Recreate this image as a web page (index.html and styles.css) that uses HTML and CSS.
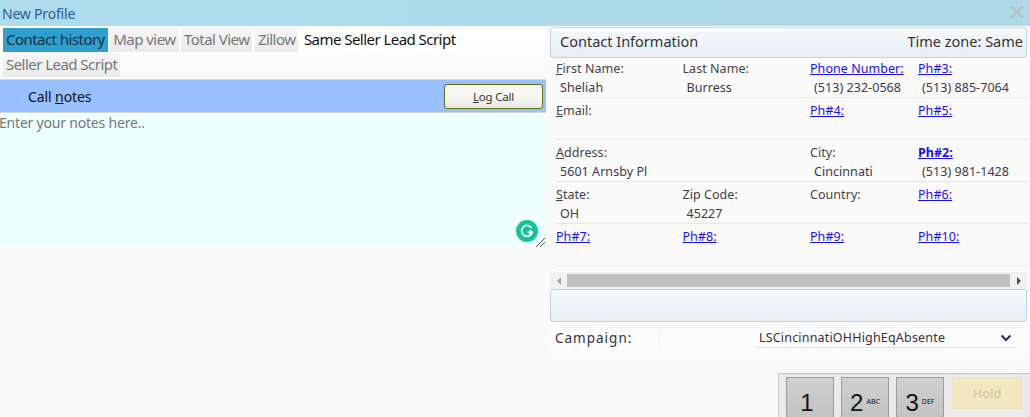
FILE: index.html
```html
<!DOCTYPE html>
<html lang="en">
<head>
  <meta charset="UTF-8">
  <meta name="viewport" content="width=device-width, initial-scale=1.0">
  <title>New Profile</title>
  <link rel="stylesheet" href="styles.css">
</head>
<body>
  <header class="title-bar">
    <span class="title-text">New Profile</span>
    <svg class="close-icon" width="14" height="14" viewBox="0 0 16 16"><path d="M1.5 1.5 14.5 14.5M14.5 1.5 1.5 14.5" stroke="#b3c0c6" stroke-width="2.6" fill="none"/></svg>
  </header>

  <div class="columns">
    <section class="left-col">
      <nav class="tabs">
        <a class="tab tab-active">Contact history</a>
        <a class="tab">Map view</a>
        <a class="tab">Total View</a>
        <a class="tab">Zillow</a>
        <a class="tab tab-plain">Same Seller Lead Script</a>
        <a class="tab">Seller Lead Script</a>
      </nav>

      <div class="notes-bar">
        <span class="notes-label">Call <u>n</u>otes</span>
        <button class="log-btn"><u>L</u>og Call</button>
      </div>

      <div class="notes-box">
        <span class="notes-hint">Enter your notes here..</span>
        <span class="grammarly">
          <svg width="22" height="22" viewBox="0 0 22 22"><circle cx="11" cy="11" r="11" fill="#15c39a"/><path d="M15.6 8A5.4 5.4 0 1 0 16.2 12.4H11.6M16.2 12.4 13.6 10.4M16.2 12.4 14 14.8" stroke="#fff" stroke-width="1.7" fill="none"/></svg>
        </span>
        <svg class="grip" width="9" height="9" viewBox="0 0 9 9"><path d="M0 9 9 0M4 9 9 4" stroke="#555" stroke-width="1" fill="none"/></svg>
      </div>
    </section>

    <section class="right-col">
      <div class="panel-head">
        <span class="panel-title">Contact Information</span>
        <span class="panel-zone">Time zone: Same</span>
      </div>

      <div class="info-row info-row-first">
        <div class="cell"><span class="lbl"><u>F</u>irst Name:</span><span class="val">Sheliah</span></div>
        <div class="cell"><span class="lbl">Last Name:</span><span class="val">Burress</span></div>
        <div class="cell"><a class="ph">Phone Number:</a><span class="val">(513) 232-0568</span></div>
        <div class="cell"><a class="ph">Ph#3:</a><span class="val">(513) 885-7064</span></div>
      </div>
      <div class="info-row">
        <div class="cell cell-wide"><span class="lbl"><u>E</u>mail:</span></div>
        <div class="cell"><a class="ph">Ph#4:</a></div>
        <div class="cell"><a class="ph">Ph#5:</a></div>
      </div>
      <div class="info-row">
        <div class="cell cell-wide"><span class="lbl"><u>A</u>ddress:</span><span class="val">5601 Arnsby Pl</span></div>
        <div class="cell"><span class="lbl">City:</span><span class="val">Cincinnati</span></div>
        <div class="cell"><a class="ph ph-bold">Ph#2:</a><span class="val">(513) 981-1428</span></div>
      </div>
      <div class="info-row">
        <div class="cell"><span class="lbl"><u>S</u>tate:</span><span class="val">OH</span></div>
        <div class="cell"><span class="lbl">Zip Code:</span><span class="val">45227</span></div>
        <div class="cell"><span class="lbl">Country:</span></div>
        <div class="cell"><a class="ph">Ph#6:</a></div>
      </div>
      <div class="info-row">
        <div class="cell"><a class="ph">Ph#7:</a></div>
        <div class="cell"><a class="ph">Ph#8:</a></div>
        <div class="cell"><a class="ph">Ph#9:</a></div>
        <div class="cell"><a class="ph">Ph#10:</a></div>
      </div>

      <div class="scrollbar">
        <span class="arrow arrow-left"></span>
        <span class="thumb"></span>
        <span class="arrow arrow-right"></span>
      </div>

      <div class="empty-panel"></div>

      <div class="campaign">
        <span class="campaign-label">Campaign:</span>
        <div class="campaign-select">
          <span>LSCincinnatiOHHighEqAbsente</span>
          <svg width="12" height="8" viewBox="0 0 12 8"><path d="M1.5 1.5 6 6 10.5 1.5" stroke="#2b2b55" stroke-width="2" fill="none"/></svg>
        </div>
      </div>

      <div class="dial-wrap">
        <div class="dial">
          <button class="key"><span class="key-num key-num-solo">1</span></button>
          <button class="key"><span class="key-num">2</span><span class="key-sub">ABC</span></button>
          <button class="key"><span class="key-num">3</span><span class="key-sub">DEF</span></button>
          <button class="hold">Hold</button>
        </div>
      </div>
    </section>
  </div>
</body>
</html>
```

FILE: styles.css
```css
html, body {
  height: 100%;
}

body {
  margin: 0;
  height: 417px;
  overflow: hidden;
  background: #fafafa;
  font-family: "Noto Sans", "Open Sans", sans-serif;
  color: #333;
}

.title-bar {
  height: 26px;
  background: linear-gradient(to right, #aedcec, #add9e8);
  display: flex;
  align-items: center;
  justify-content: space-between;
  padding: 0 6px 0 2px;
}

.title-text {
  font-size: 14px;
  letter-spacing: -0.2px;
  color: #2a5d93;
}

.close-icon {
  margin-top: -2px;
}

.columns {
  display: flex;
  align-items: flex-start;
}

/* left side */
.left-col {
  width: 546px;
  flex: none;
}

.tabs {
  display: flex;
  flex-wrap: wrap;
  gap: 1px 2.5px;
  padding: 2px 0 2px 3px;
  background: linear-gradient(#fff, #fafafa);
  height: 53px;
  box-sizing: border-box;
}

.tab {
  height: 24px;
  line-height: 22px;
  padding: 0 3px;
  font-size: 15px;
  letter-spacing: -0.54px;
  color: #777;
  background: linear-gradient(#f6f6f6, #eaeaea);
}

.tab-active {
  background: #2f9fd0;
  color: #10303f;
}

.tab-plain {
  background: #fff;
  color: #111;
}

.notes-bar {
  height: 34px;
  box-sizing: border-box;
  border-top: 1px solid #cfd8e0;
  border-bottom: 1px solid #d5d5d5;
  background: #99c0ff;
  display: flex;
  align-items: center;
  justify-content: space-between;
  padding: 1px 3px 0 28px;
}

.notes-label {
  font-size: 14px;
  letter-spacing: -0.1px;
  color: #111;
}

.log-btn {
  width: 99px;
  height: 25px;
  border: 1px solid #66700a;
  border-radius: 3px;
  background: linear-gradient(#f7f7f2 50%, #e8e8e4);
  font-family: inherit;
  font-size: 11.5px;
  letter-spacing: -0.2px;
  color: #333;
  padding: 0;
}

.notes-box {
  position: relative;
  height: 135px;
  background: #eeffff;
  box-sizing: border-box;
  font-size: 14px;
  letter-spacing: -0.2px;
  color: #777;
  line-height: 20px;
}

.notes-hint {
  margin-left: -1px;
}

.grammarly {
  position: absolute;
  right: 8px;
  bottom: 6px;
  width: 22px;
  height: 22px;
}

.grip {
  position: absolute;
  right: 1px;
  bottom: 1px;
}

/* right side */
.right-col {
  width: 477px;
  margin-left: 4px;
  flex: none;
}

.panel-head {
  height: 31px;
  box-sizing: border-box;
  margin-top: 1px;
  border: 1px solid #bcd6e6;
  border-radius: 3px;
  background: linear-gradient(#f7fafc, #e6edf4);
  display: flex;
  justify-content: space-between;
  align-items: center;
  padding: 0 3px 3px 9px;
  font-size: 14.5px;
  color: #333;
}

.info-row {
  display: grid;
  grid-template-columns: 126.5px 127.5px 108px 1fr;
  height: 42px;
  box-sizing: border-box;
  margin-left: 6px;
  padding-top: 3px;
  border-bottom: 1px solid #e6e6e6;
  font-size: 12.5px;
  letter-spacing: 0.05px;
  line-height: 19px;
}

.info-row-first {
  height: 40px;
  padding-top: 1px;
}

.cell {
  display: flex;
  flex-direction: column;
  align-items: flex-start;
}

.cell-wide {
  grid-column: span 2;
}

.lbl {
  color: #444;
}

.val {
  color: #3a3a4a;
  padding-left: 4px;
}

.ph {
  color: #1a10ee;
  text-decoration: underline;
}

.ph-bold {
  font-weight: bold;
}

.scrollbar {
  height: 17px;
  margin-top: 6px;
  background: #f1f1f1;
  display: flex;
  align-items: center;
}

.thumb {
  flex: 1;
  height: 13px;
  background: #c1c1c1;
}

.arrow {
  width: 17px;
  display: flex;
  justify-content: center;
}

.arrow::before {
  content: "";
  border: 4px solid transparent;
}

.arrow-left::before {
  border-right-color: #a3a3a3;
  border-left-width: 0;
}

.arrow-right::before {
  border-left-color: #505050;
  border-right-width: 0;
}

.empty-panel {
  height: 33px;
  box-sizing: border-box;
  border: 1px solid #aed6e8;
  border-radius: 3px;
  background: linear-gradient(#f7fafc, #e6edf4);
}

.campaign {
  display: grid;
  grid-template-columns: 110px 1fr;
  height: 29px;
  margin-top: 6px;
  padding-right: 11px;
  background: #fcfcfc;
  font-size: 13.5px;
  letter-spacing: 1px;
}

.campaign-label {
  padding-left: 5px;
  line-height: 21px;
  border-right: 1px dashed #eee;
  height: 21px;
}

.campaign-select {
  height: 19px;
  margin-left: 95px;
  border-bottom: 1px solid #e2e2e2;
  display: flex;
  justify-content: space-between;
  align-items: center;
  padding: 0 4px;
  font-size: 12.5px;
  letter-spacing: 0.18px;
  color: #333;
}

.dial-wrap {
  display: flex;
  justify-content: flex-end;
  margin-top: 16px;
  margin-right: -3px;
}

/* the keypad runs off the bottom of the window */
.dial {
  width: 252px;
  height: 44px;
  box-sizing: border-box;
  background: #eaeaea;
  border: 1px solid #c4c4c4;
  border-width: 1px 0 0 1px;
  padding: 3px 0 0 7px;
  display: flex;
  align-items: flex-start;
  gap: 7px;
}

.key {
  width: 48px;
  height: 40px;
  border: 1px solid #9c9c9c;
  border-bottom: 0;
  background: linear-gradient(#d0d0d0, #c2c2c2);
  font-family: inherit;
  padding: 13px 0 0 0;
  display: flex;
  align-items: flex-start;
  justify-content: center;
  gap: 3px;
  color: #111;
}

.key-num {
  font-family: "Liberation Sans", sans-serif;
  font-size: 24px;
  line-height: 24px;
}

.key-num-solo {
  margin-right: 6px;
}

.key-sub {
  font-size: 7px;
  line-height: 8px;
  margin-top: 7px;
}

.hold {
  width: 70px;
  height: 32px;
  margin-left: 1px;
  border: 1px solid #ece2bc;
  background: #f3e7c0;
  font-family: inherit;
  font-size: 13px;
  color: #c9c4ae;
  padding: 0;
}
```
